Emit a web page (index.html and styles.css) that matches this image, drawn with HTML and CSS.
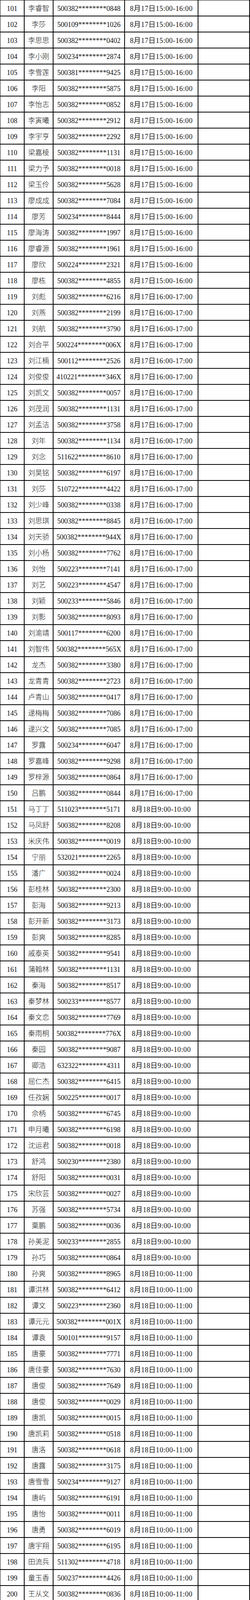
FILE: index.html
```html
<!DOCTYPE html>
<html lang="zh-CN">
<head>
<meta charset="utf-8">
<title>名单</title>
<link rel="stylesheet" href="styles.css">
</head>
<body>
<div class="sheet">
<div class="c">101</div><div class="c n">李睿智</div><div class="c">500382********0848</div><div class="c d">8月17日15:00-16:00</div><div class="c"></div>
<div class="c">102</div><div class="c n">李莎</div><div class="c">500109********1026</div><div class="c d">8月17日15:00-16:00</div><div class="c"></div>
<div class="c">103</div><div class="c n">李思思</div><div class="c">500382********0402</div><div class="c d">8月17日15:00-16:00</div><div class="c"></div>
<div class="c">104</div><div class="c n">李小刚</div><div class="c">500234********2874</div><div class="c d">8月17日15:00-16:00</div><div class="c"></div>
<div class="c">105</div><div class="c n">李雪莲</div><div class="c">500381********9425</div><div class="c d">8月17日15:00-16:00</div><div class="c"></div>
<div class="c">106</div><div class="c n">李阳</div><div class="c">500382********5875</div><div class="c d">8月17日15:00-16:00</div><div class="c"></div>
<div class="c">107</div><div class="c n">李怡志</div><div class="c">500382********0852</div><div class="c d">8月17日15:00-16:00</div><div class="c"></div>
<div class="c">108</div><div class="c n">李寅曦</div><div class="c">500382********2912</div><div class="c d">8月17日15:00-16:00</div><div class="c"></div>
<div class="c">109</div><div class="c n">李宇亨</div><div class="c">500382********2292</div><div class="c d">8月17日15:00-16:00</div><div class="c"></div>
<div class="c">110</div><div class="c n">梁嘉棱</div><div class="c">500382********1131</div><div class="c d">8月17日15:00-16:00</div><div class="c"></div>
<div class="c">111</div><div class="c n">梁力予</div><div class="c">500382********0018</div><div class="c d">8月17日15:00-16:00</div><div class="c"></div>
<div class="c">112</div><div class="c n">梁玉伶</div><div class="c">500382********5628</div><div class="c d">8月17日15:00-16:00</div><div class="c"></div>
<div class="c">113</div><div class="c n">廖成成</div><div class="c">500382********7084</div><div class="c d">8月17日15:00-16:00</div><div class="c"></div>
<div class="c">114</div><div class="c n">廖芳</div><div class="c">500234********8444</div><div class="c d">8月17日15:00-16:00</div><div class="c"></div>
<div class="c">115</div><div class="c n">廖海涛</div><div class="c">500382********1997</div><div class="c d">8月17日15:00-16:00</div><div class="c"></div>
<div class="c">116</div><div class="c n">廖睿源</div><div class="c">500382********1961</div><div class="c d">8月17日15:00-16:00</div><div class="c"></div>
<div class="c">117</div><div class="c n">廖欣</div><div class="c">500224********2321</div><div class="c d">8月17日15:00-16:00</div><div class="c"></div>
<div class="c">118</div><div class="c n">廖栋</div><div class="c">500382********4855</div><div class="c d">8月17日15:00-16:00</div><div class="c"></div>
<div class="c">119</div><div class="c n">刘彪</div><div class="c">500382********6216</div><div class="c d">8月17日16:00-17:00</div><div class="c"></div>
<div class="c">120</div><div class="c n">刘燕</div><div class="c">500382********2199</div><div class="c d">8月17日16:00-17:00</div><div class="c"></div>
<div class="c">121</div><div class="c n">刘航</div><div class="c">500382********3790</div><div class="c d">8月17日16:00-17:00</div><div class="c"></div>
<div class="c">122</div><div class="c n">刘合平</div><div class="c">500224********006X</div><div class="c d">8月17日16:00-17:00</div><div class="c"></div>
<div class="c">123</div><div class="c n">刘江楠</div><div class="c">500112********2526</div><div class="c d">8月17日16:00-17:00</div><div class="c"></div>
<div class="c">124</div><div class="c n">刘俊俊</div><div class="c">410221********346X</div><div class="c d">8月17日16:00-17:00</div><div class="c"></div>
<div class="c">125</div><div class="c n">刘凯文</div><div class="c">500382********0057</div><div class="c d">8月17日16:00-17:00</div><div class="c"></div>
<div class="c">126</div><div class="c n">刘茂润</div><div class="c">500382********1131</div><div class="c d">8月17日16:00-17:00</div><div class="c"></div>
<div class="c">127</div><div class="c n">刘孟洁</div><div class="c">500382********3758</div><div class="c d">8月17日16:00-17:00</div><div class="c"></div>
<div class="c">128</div><div class="c n">刘年</div><div class="c">500382********1134</div><div class="c d">8月17日16:00-17:00</div><div class="c"></div>
<div class="c">129</div><div class="c n">刘念</div><div class="c">511622********8610</div><div class="c d">8月17日16:00-17:00</div><div class="c"></div>
<div class="c">130</div><div class="c n">刘昊铭</div><div class="c">500382********6197</div><div class="c d">8月17日16:00-17:00</div><div class="c"></div>
<div class="c">131</div><div class="c n">刘莎</div><div class="c">510722********4422</div><div class="c d">8月17日16:00-17:00</div><div class="c"></div>
<div class="c">132</div><div class="c n">刘少峰</div><div class="c">500382********0338</div><div class="c d">8月17日16:00-17:00</div><div class="c"></div>
<div class="c">133</div><div class="c n">刘思琪</div><div class="c">500382********8845</div><div class="c d">8月17日16:00-17:00</div><div class="c"></div>
<div class="c">134</div><div class="c n">刘天骄</div><div class="c">500382********944X</div><div class="c d">8月17日16:00-17:00</div><div class="c"></div>
<div class="c">135</div><div class="c n">刘小杨</div><div class="c">500382********7762</div><div class="c d">8月17日16:00-17:00</div><div class="c"></div>
<div class="c">136</div><div class="c n">刘怡</div><div class="c">500223********7141</div><div class="c d">8月17日16:00-17:00</div><div class="c"></div>
<div class="c">137</div><div class="c n">刘艺</div><div class="c">500223********4547</div><div class="c d">8月17日16:00-17:00</div><div class="c"></div>
<div class="c">138</div><div class="c n">刘颖</div><div class="c">500233********5846</div><div class="c d">8月17日16:00-17:00</div><div class="c"></div>
<div class="c">139</div><div class="c n">刘影</div><div class="c">500382********8093</div><div class="c d">8月17日16:00-17:00</div><div class="c"></div>
<div class="c">140</div><div class="c n">刘渝靖</div><div class="c">500117********6200</div><div class="c d">8月17日16:00-17:00</div><div class="c"></div>
<div class="c">141</div><div class="c n">刘智伟</div><div class="c">500382********565X</div><div class="c d">8月17日16:00-17:00</div><div class="c"></div>
<div class="c">142</div><div class="c n">龙杰</div><div class="c">500382********3380</div><div class="c d">8月17日16:00-17:00</div><div class="c"></div>
<div class="c">143</div><div class="c n">龙青青</div><div class="c">500382********2723</div><div class="c d">8月17日16:00-17:00</div><div class="c"></div>
<div class="c">144</div><div class="c n">卢青山</div><div class="c">500382********0417</div><div class="c d">8月17日16:00-17:00</div><div class="c"></div>
<div class="c">145</div><div class="c n">逯梅梅</div><div class="c">500382********7086</div><div class="c d">8月17日16:00-17:00</div><div class="c"></div>
<div class="c">146</div><div class="c n">逯兴文</div><div class="c">500382********7085</div><div class="c d">8月17日16:00-17:00</div><div class="c"></div>
<div class="c">147</div><div class="c n">罗露</div><div class="c">500234********6047</div><div class="c d">8月17日16:00-17:00</div><div class="c"></div>
<div class="c">148</div><div class="c n">罗嘉峰</div><div class="c">500382********9298</div><div class="c d">8月17日16:00-17:00</div><div class="c"></div>
<div class="c">149</div><div class="c n">罗梓源</div><div class="c">500382********0864</div><div class="c d">8月17日16:00-17:00</div><div class="c"></div>
<div class="c">150</div><div class="c n">吕鹏</div><div class="c">500382********0844</div><div class="c d">8月17日16:00-17:00</div><div class="c"></div>
<div class="c">151</div><div class="c n">马丁丁</div><div class="c">511023********5171</div><div class="c d">8月18日9:00-10:00</div><div class="c"></div>
<div class="c">152</div><div class="c n">马凤舒</div><div class="c">500382********8208</div><div class="c d">8月18日9:00-10:00</div><div class="c"></div>
<div class="c">153</div><div class="c n">米庆伟</div><div class="c">500382********0019</div><div class="c d">8月18日9:00-10:00</div><div class="c"></div>
<div class="c">154</div><div class="c n">宁丽</div><div class="c">532021********2265</div><div class="c d">8月18日9:00-10:00</div><div class="c"></div>
<div class="c">155</div><div class="c n">潘广</div><div class="c">500382********0024</div><div class="c d">8月18日9:00-10:00</div><div class="c"></div>
<div class="c">156</div><div class="c n">彭桂林</div><div class="c">500382********2300</div><div class="c d">8月18日9:00-10:00</div><div class="c"></div>
<div class="c">157</div><div class="c n">彭海</div><div class="c">500382********9213</div><div class="c d">8月18日9:00-10:00</div><div class="c"></div>
<div class="c">158</div><div class="c n">彭开新</div><div class="c">500382********3173</div><div class="c d">8月18日9:00-10:00</div><div class="c"></div>
<div class="c">159</div><div class="c n">彭爽</div><div class="c">500382********8285</div><div class="c d">8月18日9:00-10:00</div><div class="c"></div>
<div class="c">160</div><div class="c n">戚泰英</div><div class="c">500382********9541</div><div class="c d">8月18日9:00-10:00</div><div class="c"></div>
<div class="c">161</div><div class="c n">蒲翰林</div><div class="c">500382********1131</div><div class="c d">8月18日9:00-10:00</div><div class="c"></div>
<div class="c">162</div><div class="c n">秦海</div><div class="c">500382********8517</div><div class="c d">8月18日9:00-10:00</div><div class="c"></div>
<div class="c">163</div><div class="c n">秦梦林</div><div class="c">500233********8577</div><div class="c d">8月18日9:00-10:00</div><div class="c"></div>
<div class="c">164</div><div class="c n">秦文恋</div><div class="c">500382********7769</div><div class="c d">8月18日9:00-10:00</div><div class="c"></div>
<div class="c">165</div><div class="c n">秦雨桐</div><div class="c">500382********776X</div><div class="c d">8月18日9:00-10:00</div><div class="c"></div>
<div class="c">166</div><div class="c n">秦园</div><div class="c">500382********9087</div><div class="c d">8月18日9:00-10:00</div><div class="c"></div>
<div class="c">167</div><div class="c n">卿浩</div><div class="c">632322********4311</div><div class="c d">8月18日9:00-10:00</div><div class="c"></div>
<div class="c">168</div><div class="c n">屈仁杰</div><div class="c">500382********6415</div><div class="c d">8月18日9:00-10:00</div><div class="c"></div>
<div class="c">169</div><div class="c n">任孜娴</div><div class="c">500225********0017</div><div class="c d">8月18日9:00-10:00</div><div class="c"></div>
<div class="c">170</div><div class="c n">佘柄</div><div class="c">500382********6745</div><div class="c d">8月18日9:00-10:00</div><div class="c"></div>
<div class="c">171</div><div class="c n">申月曦</div><div class="c">500382********6198</div><div class="c d">8月18日9:00-10:00</div><div class="c"></div>
<div class="c">172</div><div class="c n">沈运君</div><div class="c">500382********0018</div><div class="c d">8月18日9:00-10:00</div><div class="c"></div>
<div class="c">173</div><div class="c n">舒鸿</div><div class="c">500230********2380</div><div class="c d">8月18日9:00-10:00</div><div class="c"></div>
<div class="c">174</div><div class="c n">舒阳</div><div class="c">500382********0031</div><div class="c d">8月18日9:00-10:00</div><div class="c"></div>
<div class="c">175</div><div class="c n">宋欣芸</div><div class="c">500382********0027</div><div class="c d">8月18日9:00-10:00</div><div class="c"></div>
<div class="c">176</div><div class="c n">苏强</div><div class="c">500382********5734</div><div class="c d">8月18日9:00-10:00</div><div class="c"></div>
<div class="c">177</div><div class="c n">粟鹏</div><div class="c">500382********0036</div><div class="c d">8月18日9:00-10:00</div><div class="c"></div>
<div class="c">178</div><div class="c n">孙美泥</div><div class="c">500233********2855</div><div class="c d">8月18日9:00-10:00</div><div class="c"></div>
<div class="c">179</div><div class="c n">孙巧</div><div class="c">500382********0864</div><div class="c d">8月18日9:00-10:00</div><div class="c"></div>
<div class="c">180</div><div class="c n">孙爽</div><div class="c">500382********8965</div><div class="c d">8月18日10:00-11:00</div><div class="c"></div>
<div class="c">181</div><div class="c n">谭洪林</div><div class="c">500382********6412</div><div class="c d">8月18日10:00-11:00</div><div class="c"></div>
<div class="c">182</div><div class="c n">谭文</div><div class="c">500223********2360</div><div class="c d">8月18日10:00-11:00</div><div class="c"></div>
<div class="c">183</div><div class="c n">谭元元</div><div class="c">500382********001X</div><div class="c d">8月18日10:00-11:00</div><div class="c"></div>
<div class="c">184</div><div class="c n">谭袁</div><div class="c">500101********9157</div><div class="c d">8月18日10:00-11:00</div><div class="c"></div>
<div class="c">185</div><div class="c n">唐豪</div><div class="c">500382********7771</div><div class="c d">8月18日10:00-11:00</div><div class="c"></div>
<div class="c">186</div><div class="c n">唐佳豪</div><div class="c">500382********7630</div><div class="c d">8月18日10:00-11:00</div><div class="c"></div>
<div class="c">187</div><div class="c n">唐俊</div><div class="c">500382********7649</div><div class="c d">8月18日10:00-11:00</div><div class="c"></div>
<div class="c">188</div><div class="c n">唐俊</div><div class="c">500382********0029</div><div class="c d">8月18日10:00-11:00</div><div class="c"></div>
<div class="c">189</div><div class="c n">唐凯</div><div class="c">500382********0015</div><div class="c d">8月18日10:00-11:00</div><div class="c"></div>
<div class="c">190</div><div class="c n">唐凯莉</div><div class="c">500382********0518</div><div class="c d">8月18日10:00-11:00</div><div class="c"></div>
<div class="c">191</div><div class="c n">唐洛</div><div class="c">500382********0618</div><div class="c d">8月18日10:00-11:00</div><div class="c"></div>
<div class="c">192</div><div class="c n">唐露</div><div class="c">500382********3175</div><div class="c d">8月18日10:00-11:00</div><div class="c"></div>
<div class="c">193</div><div class="c n">唐雪雪</div><div class="c">500234********9127</div><div class="c d">8月18日10:00-11:00</div><div class="c"></div>
<div class="c">194</div><div class="c n">唐屿</div><div class="c">500382********6191</div><div class="c d">8月18日10:00-11:00</div><div class="c"></div>
<div class="c">195</div><div class="c n">唐怡</div><div class="c">500382********0011</div><div class="c d">8月18日10:00-11:00</div><div class="c"></div>
<div class="c">196</div><div class="c n">唐勇</div><div class="c">500382********6019</div><div class="c d">8月18日10:00-11:00</div><div class="c"></div>
<div class="c">197</div><div class="c n">唐宇翔</div><div class="c">500382********6195</div><div class="c d">8月18日10:00-11:00</div><div class="c"></div>
<div class="c">198</div><div class="c n">田流兵</div><div class="c">511302********4718</div><div class="c d">8月18日10:00-11:00</div><div class="c"></div>
<div class="c">199</div><div class="c n">童玉香</div><div class="c">500237********4426</div><div class="c d">8月18日10:00-11:00</div><div class="c"></div>
<div class="c">200</div><div class="c n">王从文</div><div class="c">500382********0836</div><div class="c d">8月18日10:00-11:00</div><div class="c"></div>
</div>
</body>
</html>
```
FILE: styles.css
```css
html, body {
  margin: 0;
  padding: 0;
  background: #fff;
}

.sheet {
  display: grid;
  grid-template-columns: 62px 74px 183px 188px 132px;
  grid-auto-rows: 41px;
  width: max-content;
  border-top: 1px solid #000;
  border-left: 1px solid #000;
}

.c {
  box-sizing: border-box;
  border-right: 2px solid #000;
  border-bottom: 2px solid #000;
  display: flex;
  align-items: center;
  justify-content: center;
  padding-top: 2px;
  font-family: "Liberation Serif", "Noto Sans CJK SC", serif;
  font-size: 18px;
  line-height: 20px;
  color: #111;
  white-space: nowrap;
}

.n {
  font-weight: 300;
}

.d {
  letter-spacing: 0.6px;
}
```
